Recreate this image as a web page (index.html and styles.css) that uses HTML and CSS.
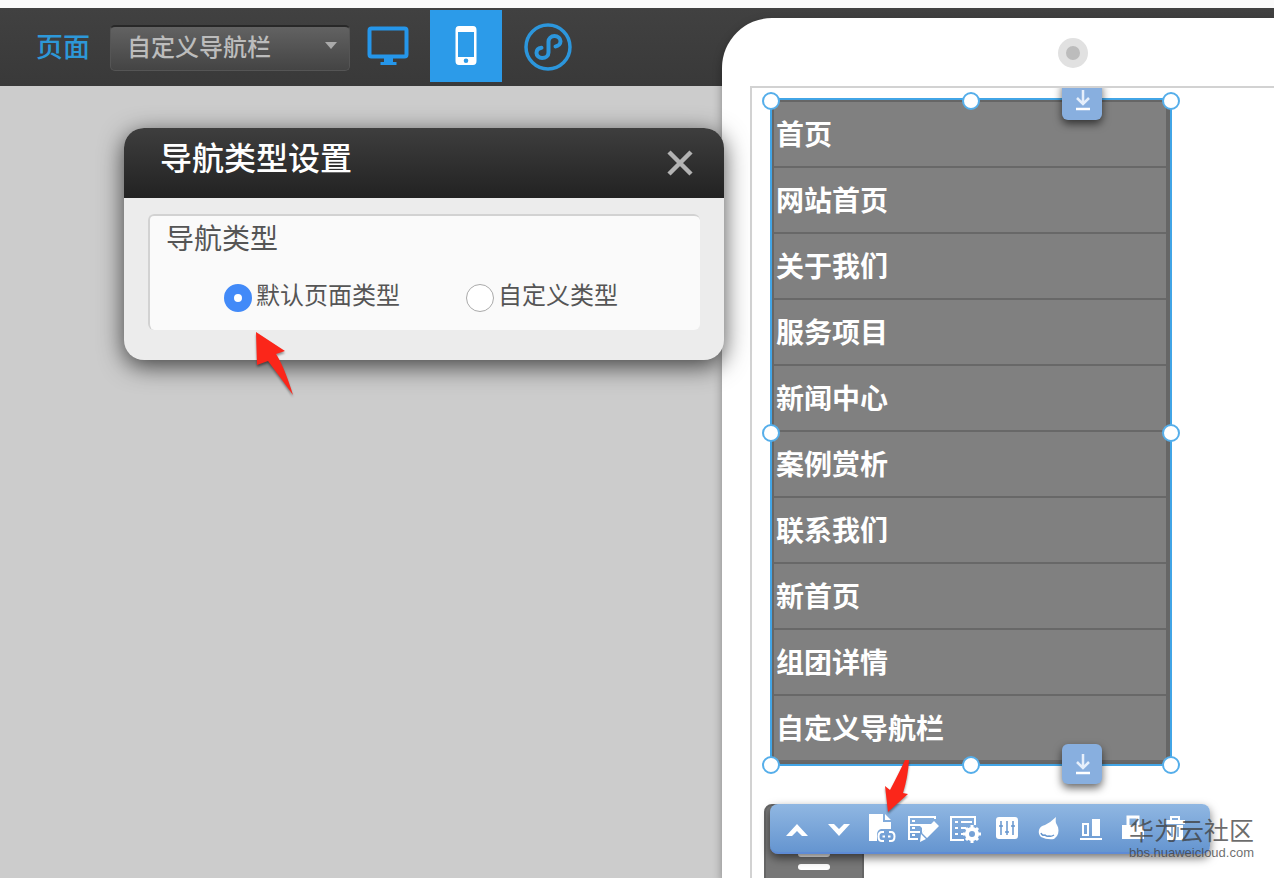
FILE: index.html
```html
<!DOCTYPE html>
<html lang="zh-CN">
<head>
<meta charset="utf-8">
<title>导航类型设置</title>
<link rel="stylesheet" href="styles.css">
</head>
<body>
<svg class="defs" aria-hidden="true">
  <symbol id="down" viewBox="0 0 20 24"><path d="M11 2v13M5 10l6 6 6-6" fill="none" stroke="#e6effb" stroke-width="2.500"/><path d="M4 21h14" stroke="#fff" stroke-width="2.500"/></symbol>
</svg>
<header class="topbar">
  <label class="topbar-label" for="page">页面</label>
  <div class="page-select">
    <select id="page"><option>自定义导航栏</option></select>
    <svg class="caret" viewBox="0 0 12 8"><path d="M0 0h12L6 7z" fill="#aaa"/></svg>
  </div>
  <div class="devices">
    <button class="device" aria-label="电脑">
      <svg width="42" height="42" viewBox="0 0 42 42"><rect x="2.500" y="3.500" width="37" height="28" rx="2" fill="none" stroke="#2596ea" stroke-width="4"/><path d="M17 32h9v5h3.500v3h-16v-3H17z" fill="#2596ea"/></svg>
    </button>
    <button class="device active" aria-label="手机">
      <svg width="22" height="40" viewBox="0 0 22 40"><path fill-rule="evenodd" fill="#fff" d="M4 0h14q3.500 0 3.500 4v31q0 4-3.500 4H4Q.5 39 .5 35V4Q.5 0 4 0zM3 6v25h16V6zm8 26.500a2.300 2.300 0 100 4.600 2.300 2.300 0 000-4.600z"/></svg>
    </button>
    <button class="device" aria-label="小程序">
      <svg width="48" height="48" viewBox="0 0 48 48" fill="none" stroke="#2c96dc" stroke-linecap="round"><circle cx="24" cy="24" r="22" stroke-width="3.500"/><path d="M31.500 23.500c3-.4 5-2.600 5-5.200 0-3-2.800-5.300-6-5.300-3.400 0-6 2.400-6 5.600v10.800c0 3.200-2.800 5.600-6.300 5.600-3.200 0-5.700-2.200-5.700-5 0-2.700 2-4.700 5-5.200" stroke-width="4"/></svg>
    </button>
  </div>
</header>

<main class="workspace">
  <section class="phone">
    <div class="phone-head"><span class="camera"></span></div>
    <div class="screen">
      <div class="selection">
        <nav class="nav">
          <a href="#">首页</a>
          <a href="#">网站首页</a>
          <a href="#">关于我们</a>
          <a href="#">服务项目</a>
          <a href="#">新闻中心</a>
          <a href="#">案例赏析</a>
          <a href="#">联系我们</a>
          <a href="#">新首页</a>
          <a href="#">组团详情</a>
          <a href="#">自定义导航栏</a>
        </nav>
        <i class="handle top left"></i><i class="handle top center"></i><i class="handle top right"></i>
        <i class="handle middle left"></i><i class="handle middle right"></i>
        <i class="handle bottom left"></i><i class="handle bottom center"></i><i class="handle bottom right"></i>
        <button class="tag tag-top" aria-label="下移"><svg width="20" height="24"><use href="#down"/></svg></button>
        <button class="tag tag-bottom" aria-label="下移"><svg width="20" height="24"><use href="#down"/></svg></button>
      </div>
      <div class="lower">
        <button class="menu" aria-label="菜单"><span></span><span></span></button>
        <div class="tools">
          <button aria-label="上移"><svg viewBox="0 0 32 32"><path d="M5 23L16 11l11 12h-6l-5-5-5 5z"/></svg></button>
          <button aria-label="下移"><svg viewBox="0 0 32 32"><path d="M5 11L16 23l11-12h-6l-5 5-5-5z"/></svg></button>
          <button aria-label="导航类型"><svg viewBox="0 0 32 32"><path d="M4 1h14v8h8v7H16q-4 1-4 6v6H4zM20 1l6 6h-6z"/><path d="M19 19h-2q-3.500 0-3.500 4.500t3.500 4.500h2M24 19h2q3.500 0 3.500 4.500T26 28h-2M17.500 23.500h2.500M23 23.500h2.500" fill="none" stroke="#fff" stroke-width="2"/></svg></button>
          <button aria-label="编辑"><svg viewBox="0 0 32 32"><path d="M28 6V4H2v22h9M3 12h22M3 19h10" fill="none" stroke="#fff" stroke-width="2"/><path d="M5 7h3v2H5zM5 14h3v2H5zM5 21h3v2H5zM11 11h15l-11 9v-5z"/><path d="M27 8l5 5-12 12-5-5zM14 21l5 5-6 3z"/></svg></button>
          <button aria-label="设置"><svg viewBox="0 0 32 32"><path d="M26 12V4H2v23h13M6 9h3M12 9h11M6 15h3M12 15h5M6 21h3M12 21h3" fill="none" stroke="#fff" stroke-width="2"/><circle cx="23" cy="21" r="5" fill="none" stroke="#fff" stroke-width="4"/><path d="M23 12v4M23 26v4M14 21h4M28 21h4M17 15l3 3M26 24l3 3M29 15l-3 3M20 24l-3 3" stroke="#fff" stroke-width="3"/></svg></button>
          <button aria-label="参数"><svg viewBox="0 0 32 32"><rect x="5" y="4" width="22" height="22" rx="3"/><path d="M10 8v14M16 8v14M22 8v14M8 13h4M14 19h4M20 13h4" fill="none" stroke="#6595ce" stroke-width="1.500"/></svg></button>
          <button aria-label="动画"><svg viewBox="0 0 32 32"><path d="M23 4q-1 5 1 8c2 3 2 8 0 11l-3 3q-7 1-13-2-3-3-2-7 1-4 6-5 6-3 11-8z"/><path d="M8 20q1 3 4 2 2 2 4 1 2 1 5-1" fill="none" stroke="#6595ce" stroke-width="1.500"/></svg></button>
          <button aria-label="对齐"><svg viewBox="0 0 32 32"><path d="M17 6h8v17h-8zM5 25h22v2H5z"/><path d="M8 11h5v11H8z" fill="none" stroke="#fff" stroke-width="2"/></svg></button>
          <button aria-label="锁定"><svg viewBox="0 0 32 32"><path d="M5 12h22v14H5z"/><path d="M11 13V4h10v9" fill="none" stroke="#fff" stroke-width="3"/></svg></button>
          <button aria-label="删除"><svg viewBox="0 0 32 32"><path d="M6 7h20v4H6zM8 12h16v15H8z"/><path d="M12 7V4h8v3" fill="none" stroke="#fff" stroke-width="2"/><path d="M13 14v10M19 14v10" stroke="#6c99ce" stroke-width="1.500"/></svg></button>
        </div>
      </div>
    </div>
  </section>

  <section class="dialog" role="dialog" aria-labelledby="dialog-title">
    <div class="dialog-head">
      <h1 id="dialog-title">导航类型设置</h1>
      <button class="close" aria-label="关闭"><svg width="28" height="28" viewBox="0 0 28 28"><path d="M3 3l22 22M25 3L3 25" stroke="#b3b3b3" stroke-width="4.500"/></svg></button>
    </div>
    <fieldset class="panel">
      <legend>导航类型</legend>
      <div class="choices">
        <label><input type="radio" name="kind" checked>默认页面类型</label>
        <label><input type="radio" name="kind">自定义类型</label>
      </div>
    </fieldset>
  </section>

  <svg class="arrow arrow-radio" viewBox="0 0 40 66"><path d="M1 1l29 19-9 3q8 12 17 41Q22 42 13 30L2 34z" fill="#fb261a"/></svg>
  <svg class="arrow arrow-tool" viewBox="0 0 26 54"><path d="M25 1q-1 17-6 33l5 1L4 53 1 27l5 4Q15 14 21 1z" fill="#fb261a"/></svg>
  <div class="watermark"><strong>华为云社区</strong><span>bbs.huaweicloud.com</span></div>
</main>
</body>
</html>
```
FILE: styles.css
```css
* { box-sizing: border-box; }
body {
  margin: 0;
  min-height: 100vh;
  position: relative;
  overflow: hidden;
  background: #ccc;
  color: #555;
  font-family: "Liberation Sans", "Noto Sans CJK SC", sans-serif;
}
button { border: 0; padding: 0; background: none; display: grid; place-items: center; }
.defs { position: absolute; width: 0; height: 0; }

.topbar {
  height: 86px;
  border-top: 8px solid #fafafa;
  background: linear-gradient(#414141, #393939);
  display: flex;
  align-items: center;
  padding-left: 36px;
}
.topbar-label { width: 74px; padding-top: 2px; color: #2d98d8; font-size: 27px; font-weight: 500; line-height: 40px; }
.page-select { position: relative; width: 240px; padding-top: 2px; }
.page-select select {
  display: block;
  appearance: none;
  width: 100%;
  height: 46px;
  padding: 0 16px 2px;
  border: 1px solid #555;
  border-top: 2px solid #282828;
  border-radius: 5px;
  background: linear-gradient(#626262, #444);
  color: #bcbcbc;
  font: 500 24px/36px "Liberation Sans", "Noto Sans CJK SC", sans-serif;
}
.caret { position: absolute; right: 13px; top: 19px; width: 12px; height: 8px; }
.devices { display: flex; gap: 6px; padding: 0 0 2px 2px; }
.device { width: 72px; height: 72px; }
.device.active { background: #2c9be9; }
.device:last-child { width: 80px; padding-top: 2px; }

.phone {
  position: absolute;
  left: 722px;
  right: 0;
  top: 18px;
  bottom: 0;
  padding-left: 28px;
  border-top-left-radius: 50px;
  background: #fff;
  box-shadow: 0 4px 10px rgba(0, 0, 0, .35);
  display: flex;
  flex-direction: column;
}
.phone-head { height: 68px; padding: 20px 0 0 308px; }
.camera { display: block; width: 30px; height: 30px; border: 8px solid #e1e1e1; border-radius: 50%; background: #bcbcbc; }
.screen {
  flex: 1;
  overflow: hidden;
  padding: 10px 18px 0;
  border: solid #d2d2d2;
  border-width: 2px 0 0 2px;
}
.selection { position: relative; width: 402px; border: 2px solid #42a5e6; }
.nav { background: #808080; border: 2px solid #666; border-right-width: 4px; }
.nav a {
  display: block;
  height: 66px;
  padding: 2px 0 0 2px;
  border-bottom: 2px solid #686868;
  color: #fff;
  font-size: 28px;
  font-weight: 700;
  line-height: 62px;
  text-decoration: none;
}
.nav a { padding-top: 3px; }
.handle {
  position: absolute;
  width: 18px;
  height: 18px;
  border: 2px solid #55aeea;
  border-radius: 50%;
  background: #fff;
}
.top { top: -8px; }
.middle { top: calc(50% - 8px); }
.bottom { bottom: -10px; }
.left { left: -10px; }
.center { left: calc(50% - 9px); }
.right { right: -10px; }
.tag {
  position: absolute;
  left: 290px;
  width: 40px;
  height: 40px;
  border-radius: 6px;
  background: #88afdf;
  box-shadow: 0 4px 8px rgba(0, 0, 0, .6);
}
.tag-top { top: -20px; }
.tag-bottom { bottom: -20px; }

.lower { position: relative; width: 446px; margin: 38px 0 0 -6px; }
.menu {
  width: 100px;
  height: 100px;
  border: 2px solid #666;
  border-radius: 8px;
  background: #777;
  display: flex;
  flex-direction: column;
  align-items: center;
  gap: 7px;
  padding-top: 45px;
}
.menu span { width: 32px; height: 6px; border-radius: 3px; background: #fff; }
.tools {
  position: absolute;
  left: 6px;
  top: 0;
  display: flex;
  width: 440px;
  height: 50px;
  padding: 2px 14px 0 6px;
  border-radius: 8px;
  border-bottom: 2px solid #5e8bd5;
  background: linear-gradient(#90b7e2, #6595d0);
  box-shadow: 0 4px 10px rgba(0, 0, 0, .55);
}
.tools button { width: 42px; }
.tools svg { width: 32px; height: 32px; fill: #fff; }

.dialog {
  position: absolute;
  left: 124px;
  top: 128px;
  width: 600px;
  padding-bottom: 30px;
  border-radius: 20px;
  background: #ececec;
  box-shadow: 0 6px 24px rgba(0, 0, 0, .7);
}
.dialog-head {
  display: flex;
  align-items: center;
  justify-content: space-between;
  height: 70px;
  padding: 0 30px 0 36px;
  border-radius: 20px 20px 0 0;
  background: linear-gradient(#3e3e3e, #222);
}
h1 { margin: 0; padding-bottom: 8px; color: #fff; font-size: 32px; font-weight: 500; line-height: 40px; }
.panel {
  margin: 16px 24px 0;
  padding: 6px 16px 16px;
  border: solid #d2d2d2;
  border-width: 2px 0 0 2px;
  border-radius: 6px;
  background: #fafafa;
}
.panel legend { float: left; width: 100%; padding: 0; font-size: 28px; line-height: 36px; }
.choices { clear: both; display: flex; gap: 66px; padding: 20px 0 0 58px; }
.choices label { display: flex; align-items: center; gap: 4px; font-size: 24px; line-height: 36px; }
.choices input {
  appearance: none;
  width: 28px;
  height: 28px;
  margin: 3px 0 0;
  border: 1px solid #aaa;
  border-radius: 50%;
  background: #fff;
}
.choices input:checked { border: 10px solid #428af8; }

.arrow { position: absolute; filter: drop-shadow(0 2px 1px rgba(0, 0, 0, .4)); }
.arrow-radio { left: 255px; top: 331px; width: 40px; height: 66px; }
.arrow-tool { left: 884px; top: 759px; width: 26px; height: 54px; }
.watermark {
  position: absolute;
  right: 20px;
  bottom: 18px;
  display: flex;
  flex-direction: column;
  align-items: flex-end;
  color: rgba(60, 60, 60, .75);
}
.watermark strong { font-size: 25px; font-weight: 400; line-height: 30px; }
.watermark span { font-size: 13px; line-height: 14px; }
```
